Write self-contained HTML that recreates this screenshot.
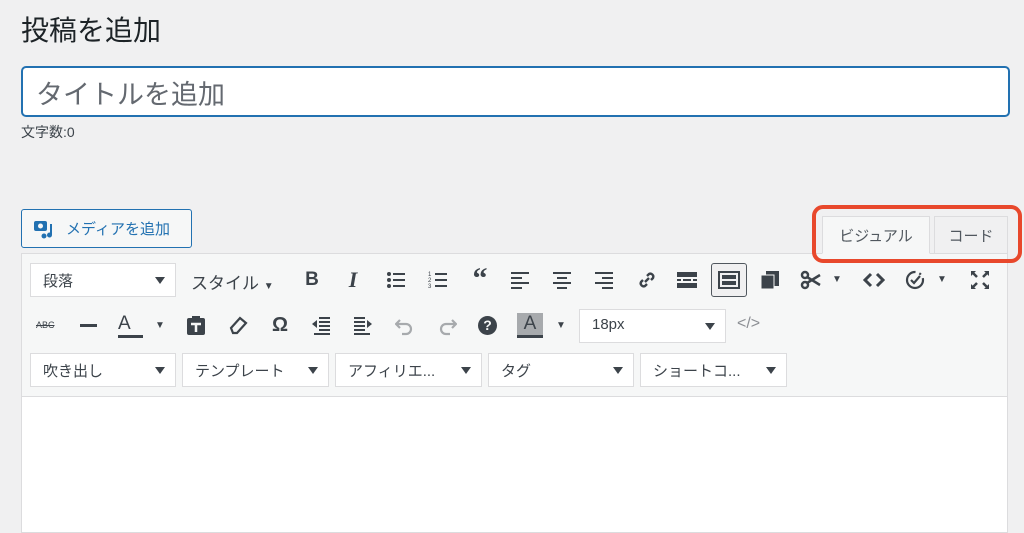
<!DOCTYPE html>
<html><head><meta charset="utf-8"><style>
*{box-sizing:border-box;margin:0;padding:0}
body{width:1024px;height:518px;overflow:hidden;background:#f0f0f1;font-family:"Liberation Sans","Noto Sans CJK JP",sans-serif;color:#1d2327;position:relative}
.abs{position:absolute;white-space:nowrap}
h1{position:absolute;left:21px;top:9px;font-size:28px;font-weight:400;color:#1d2327}
.title{left:21px;top:66px;width:989px;height:51px;border:2px solid #2271b1;border-radius:5px;background:#fff;font-size:27px;color:#646970;padding:5px 0 0 13px}
.count{left:21px;top:122px;font-size:14px;color:#3c434a}
.media{left:21px;top:209px;width:171px;height:39px;border:1px solid #2271b1;border-radius:3px;background:#f6f7f7;color:#2271b1;font-size:15px;padding:8px 0 0 44px}
.tab{top:216px;height:38px;border:1px solid #dcdcde;font-size:15px;color:#50575e;padding:8px 0 0 0;text-align:center}
.red{left:812px;top:205px;width:210px;height:58px;border:4px solid #e8482c;border-radius:11px}
.ed{left:21px;top:253px;width:987px;height:280px;border:1px solid #dcdcde;background:#fff}
.tb{left:22px;top:254px;width:985px;height:143px;background:#f6f7f7;border-bottom:1px solid #dcdcde}
.sel{height:34px;border:1px solid #dcdcde;background:#fff;font-size:15px;color:#3c434a;padding:6px 0 0 12px}
.sel:after{content:"";position:absolute;right:10px;top:13px;border-left:5px solid transparent;border-right:5px solid transparent;border-top:7px solid #3c434a}
.i{font-size:18px;color:#3c434a;font-weight:700;text-align:center;width:24px}
.ar{font-size:10px;color:#3c434a}
</style></head><body>
<h1>投稿を追加</h1>
<div class="abs title">タイトルを追加</div>
<div class="abs count">文字数:0</div>
<div class="abs media">メディアを追加</div>
<svg class="abs" style="left:33px;top:218px" width="22" height="22" viewBox="0 0 22 22"><rect x="1" y="3" width="13" height="10" rx="2" fill="#2271b1"/><circle cx="7.5" cy="8" r="2.5" fill="#f6f7f7"/><path d="M16 6h3v11a2.5 2.5 0 1 1-2-2.4V6" fill="#2271b1"/><circle cx="11" cy="18" r="2.5" fill="#2271b1"/></svg>
<div class="abs ed"></div>
<div class="abs tb"></div>
<div class="abs tab" style="left:822px;width:108px;background:#f6f7f7;border-bottom-color:#f6f7f7">ビジュアル</div>
<div class="abs tab" style="left:934px;width:74px;background:#f0f0f1">コード</div>
<div class="abs red"></div>
<!-- row1 -->
<div class="abs sel" style="left:30px;top:263px;width:146px">段落</div>
<div class="abs" style="left:191px;top:269px;font-size:17px;color:#3c434a">スタイル <span class="ar">▼</span></div>
<div class="abs i" style="left:300px;top:269px;font-size:19px">B</div>
<div class="abs i" style="left:341px;top:267px;font-style:italic;font-family:'Liberation Serif',serif;font-size:22px">I</div>
<svg class="abs" style="left:386px;top:271px" width="20" height="18" fill="#3c434a"><circle cx="3" cy="3" r="2"/><circle cx="3" cy="9" r="2"/><circle cx="3" cy="15" r="2"/><rect x="7" y="2" width="12" height="2"/><rect x="7" y="8" width="12" height="2"/><rect x="7" y="14" width="12" height="2"/></svg>
<svg class="abs" style="left:428px;top:270px" width="20" height="20" fill="#3c434a"><text x="0" y="6" font-size="6">1</text><text x="0" y="12" font-size="6">2</text><text x="0" y="18" font-size="6">3</text><rect x="7" y="3" width="12" height="2"/><rect x="7" y="9" width="12" height="2"/><rect x="7" y="15" width="12" height="2"/></svg>
<div class="abs i" style="left:468px;top:262px;font-size:30px;font-family:'Liberation Serif',serif">“</div>
<svg class="abs" style="left:511px;top:271px" width="18" height="18" fill="#3c434a"><rect y="1" width="18" height="2"/><rect y="6" width="11" height="2"/><rect y="11" width="18" height="2"/><rect y="16" width="11" height="2"/></svg>
<svg class="abs" style="left:553px;top:271px" width="18" height="18" fill="#3c434a"><rect y="1" width="18" height="2"/><rect x="4" y="6" width="10" height="2"/><rect y="11" width="18" height="2"/><rect x="4" y="16" width="10" height="2"/></svg>
<svg class="abs" style="left:595px;top:271px" width="18" height="18" fill="#3c434a"><rect y="1" width="18" height="2"/><rect x="7" y="6" width="11" height="2"/><rect y="11" width="18" height="2"/><rect x="7" y="16" width="11" height="2"/></svg>
<svg class="abs" style="left:636px;top:269px" width="22" height="22" viewBox="0 0 22 22"><path d="M9 13l4-4M7 11l-2 2a3 3 0 0 0 4 4l2-2M15 11l2-2a3 3 0 0 0-4-4l-2 2" stroke="#3c434a" stroke-width="2.4" fill="none"/></svg>
<svg class="abs" style="left:677px;top:272px" width="20" height="16"><rect y="0" width="20" height="5" fill="#3c434a"/><rect y="7" width="4" height="2" fill="#3c434a"/><rect x="6" y="7" width="8" height="2" fill="#3c434a"/><rect x="16" y="7" width="4" height="2" fill="#3c434a"/><rect y="11" width="20" height="5" fill="#3c434a"/></svg>
<div class="abs" style="left:711px;top:263px;width:36px;height:34px;border:1px solid #50575e;border-radius:3px;background:#f0f0f1"></div>
<svg class="abs" style="left:718px;top:271px" width="22" height="18"><rect x="1" y="1" width="20" height="16" fill="none" stroke="#3c434a" stroke-width="2"/><rect x="4" y="4" width="14" height="4" fill="#3c434a"/><rect x="4" y="10" width="14" height="4" fill="#3c434a"/></svg>
<svg class="abs" style="left:760px;top:270px" width="20" height="20"><rect x="6" y="1" width="13" height="15" fill="#3c434a"/><rect x="1" y="5" width="13" height="14" fill="#3c434a" stroke="#f6f7f7"/></svg>
<svg class="abs" style="left:800px;top:270px" width="22" height="20"><circle cx="5" cy="5" r="3" fill="none" stroke="#3c434a" stroke-width="2.5"/><circle cx="5" cy="15" r="3" fill="none" stroke="#3c434a" stroke-width="2.5"/><path d="M7 7l13 8M7 13l13-8" stroke="#3c434a" stroke-width="2.5"/></svg>
<div class="abs ar" style="left:832px;top:274px">▼</div>
<svg class="abs" style="left:863px;top:272px" width="22" height="16"><path d="M8 2L2 8l6 6M14 2l6 6-6 6" stroke="#3c434a" stroke-width="3" fill="none"/></svg>
<svg class="abs" style="left:905px;top:270px" width="22" height="22"><circle cx="10" cy="10" r="8" fill="none" stroke="#3c434a" stroke-width="2.2" stroke-dasharray="38 4 2 4"/><path d="M6 10l3 3 6-7" stroke="#3c434a" stroke-width="2.2" fill="none"/></svg>
<div class="abs ar" style="left:937px;top:274px">▼</div>
<svg class="abs" style="left:970px;top:270px" width="20" height="20"><path d="M2 2l5 5M18 2l-5 5M2 18l5-5M18 18l-5-5" stroke="#3c434a" stroke-width="2.5"/><path d="M1 1h5l-5 5zM19 1h-5l5 5zM1 19h5l-5-5zM19 19h-5l5-5z" fill="#3c434a"/></svg>
<!-- row2 -->
<div class="abs" style="left:36px;top:320px;font-size:9px;color:#3c434a;text-decoration:line-through">ABC</div>
<div class="abs" style="left:80px;top:324px;width:17px;height:3px;background:#3c434a"></div>
<div class="abs" style="left:118px;top:313px;font-size:19px;color:#3c434a">A</div>
<div class="abs" style="left:118px;top:335px;width:25px;height:3px;background:#3c434a"></div>
<div class="abs ar" style="left:155px;top:320px">▼</div>
<svg class="abs" style="left:186px;top:315px" width="20" height="20"><rect x="1" y="3" width="18" height="17" rx="2" fill="#3c434a"/><rect x="6" y="1" width="8" height="4" fill="#3c434a"/><path d="M5 9h10M10 9v8" stroke="#f6f7f7" stroke-width="2.5"/></svg>
<svg class="abs" style="left:227px;top:315px" width="22" height="20"><path d="M4 13l9-10 6 5-9 10H6z" fill="none" stroke="#3c434a" stroke-width="2.2"/></svg>
<div class="abs i" style="left:268px;top:314px;font-size:20px">Ω</div>
<svg class="abs" style="left:311px;top:316px" width="20" height="20" fill="#3c434a"><rect x="8" y="1" width="11" height="2"/><rect x="8" y="5" width="11" height="2"/><rect x="8" y="9" width="11" height="2"/><rect x="8" y="13" width="11" height="2"/><rect x="3" y="17" width="16" height="2"/><path d="M1 8l5-4v8z"/></svg>
<svg class="abs" style="left:353px;top:316px" width="20" height="20" fill="#3c434a"><rect x="1" y="1" width="11" height="2"/><rect x="1" y="5" width="11" height="2"/><rect x="1" y="9" width="11" height="2"/><rect x="1" y="13" width="11" height="2"/><rect x="1" y="17" width="16" height="2"/><path d="M19 8l-5-4v8z"/></svg>
<svg class="abs" style="left:395px;top:316px" width="20" height="20"><path d="M5 4L1 8l4 4M1 8h10a5 5 0 0 1 0 10H7" stroke="#a7aaad" stroke-width="2.2" fill="none"/></svg>
<svg class="abs" style="left:437px;top:316px" width="20" height="20"><path d="M15 4l4 4-4 4M19 8H9a5 5 0 0 0 0 10h4" stroke="#a7aaad" stroke-width="2.2" fill="none"/></svg>
<div class="abs" style="left:478px;top:316px;width:19px;height:19px;border-radius:50%;background:#3c434a;color:#f6f7f7;font-size:14px;font-weight:700;text-align:center;line-height:19px">?</div>
<div class="abs" style="left:517px;top:313px;width:26px;height:22px;background:#a7aaad;font-size:19px;color:#3c434a;text-align:center">A</div>
<div class="abs" style="left:517px;top:335px;width:26px;height:3px;background:#3c434a"></div>
<div class="abs ar" style="left:556px;top:320px">▼</div>
<div class="abs sel" style="left:579px;top:309px;width:147px">18px</div>
<div class="abs" style="left:737px;top:315px;font-size:16px;color:#8c8f94">&lt;/&gt;</div>
<!-- row3 -->
<div class="abs sel" style="left:30px;top:353px;width:146px">吹き出し</div>
<div class="abs sel" style="left:182px;top:353px;width:147px">テンプレート</div>
<div class="abs sel" style="left:335px;top:353px;width:147px">アフィリエ...</div>
<div class="abs sel" style="left:488px;top:353px;width:146px">タグ</div>
<div class="abs sel" style="left:640px;top:353px;width:147px">ショートコ...</div>
</body></html>
